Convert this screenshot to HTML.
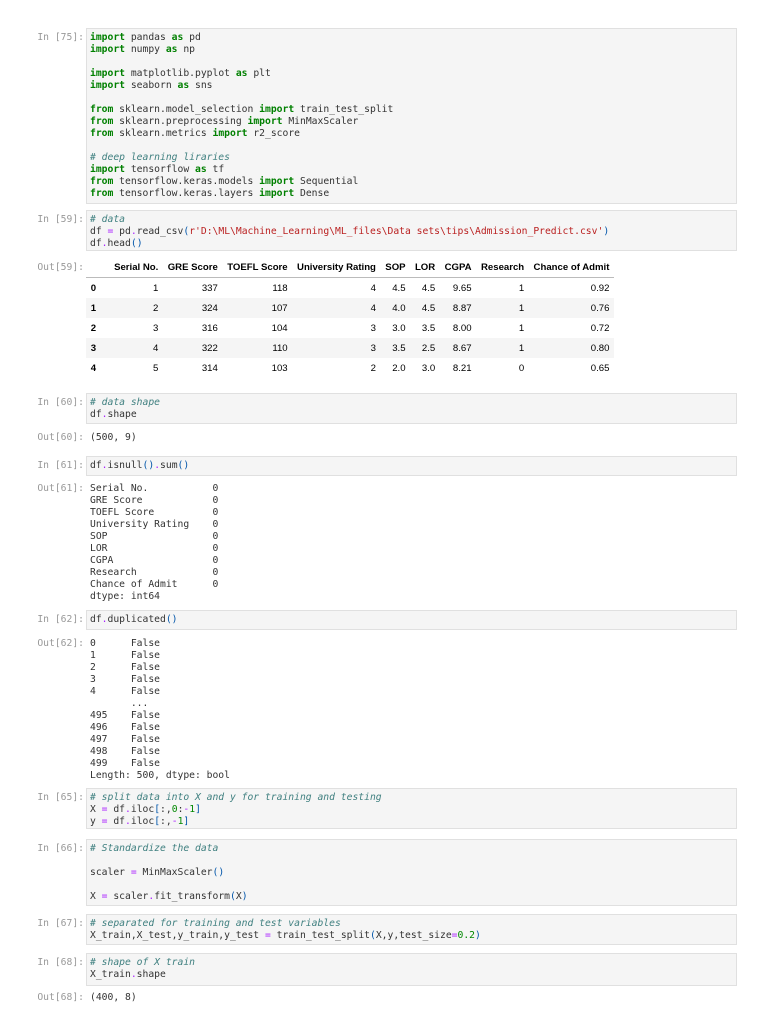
<!DOCTYPE html>
<html><head><meta charset="utf-8"><style>
body{margin:0;background:#fff;width:768px;height:1024px;position:relative;overflow:hidden;font-family:"DejaVu Sans Mono","Liberation Mono",monospace;font-size:9.7px;}
.p{position:absolute;right:684px;color:#999;white-space:pre;line-height:12px;margin-top:1px}
.b{position:absolute;left:86px;width:651px;background:#f5f5f5;border:1px solid #e0e0e0;box-sizing:border-box;}
.c{position:absolute;left:90px;white-space:pre;line-height:12px;color:#333;margin-top:1px}
.k{color:#008000;font-weight:bold}.m{color:#408080;font-style:italic}.o{color:#aa22ff}.s{color:#ba2121}.n{color:#080}.br{color:#0055aa}
table{position:absolute;left:86px;top:257px;border-collapse:collapse;font-family:"Liberation Sans",Arial,sans-serif;font-size:9.6px;color:#000}
td,th{text-align:right;padding:0 4.7px;height:20px}
th{font-weight:bold}
thead th{border-bottom:1px solid #bbb}
tbody tr:nth-child(even){background:#f5f5f5}
tbody th{text-align:left}
</style></head><body>
<div class="p" style="top:31px">In [75]:</div>
<div class="b" style="top:28px;height:176px"></div>
<div class="c" style="top:31px"><span class="k">import</span> pandas <span class="k">as</span> pd
<span class="k">import</span> numpy <span class="k">as</span> np

<span class="k">import</span> matplotlib.pyplot <span class="k">as</span> plt
<span class="k">import</span> seaborn <span class="k">as</span> sns

<span class="k">from</span> sklearn.model_selection <span class="k">import</span> train_test_split
<span class="k">from</span> sklearn.preprocessing <span class="k">import</span> MinMaxScaler
<span class="k">from</span> sklearn.metrics <span class="k">import</span> r2_score

<span class="m"># deep learning liraries</span>
<span class="k">import</span> tensorflow <span class="k">as</span> tf
<span class="k">from</span> tensorflow.keras.models <span class="k">import</span> Sequential
<span class="k">from</span> tensorflow.keras.layers <span class="k">import</span> Dense</div>

<div class="p" style="top:213px">In [59]:</div>
<div class="b" style="top:210px;height:41px"></div>
<div class="c" style="top:213px"><span class="m"># data</span>
df <span class="o">=</span> pd<span class="o">.</span>read_csv<span class="br">(</span><span class="s">r'D:\ML\Machine_Learning\ML_files\Data sets\tips\Admission_Predict.csv'</span><span class="br">)</span>
df<span class="o">.</span>head<span class="br">()</span></div>

<div class="p" style="top:261px">Out[59]:</div>
<table>
<thead><tr><th style="width:14px"></th><th>Serial No.</th><th>GRE Score</th><th>TOEFL Score</th><th>University Rating</th><th>SOP</th><th>LOR</th><th>CGPA</th><th>Research</th><th>Chance of Admit</th></tr></thead>
<tbody>
<tr><th>0</th><td>1</td><td>337</td><td>118</td><td>4</td><td>4.5</td><td>4.5</td><td>9.65</td><td>1</td><td>0.92</td></tr>
<tr><th>1</th><td>2</td><td>324</td><td>107</td><td>4</td><td>4.0</td><td>4.5</td><td>8.87</td><td>1</td><td>0.76</td></tr>
<tr><th>2</th><td>3</td><td>316</td><td>104</td><td>3</td><td>3.0</td><td>3.5</td><td>8.00</td><td>1</td><td>0.72</td></tr>
<tr><th>3</th><td>4</td><td>322</td><td>110</td><td>3</td><td>3.5</td><td>2.5</td><td>8.67</td><td>1</td><td>0.80</td></tr>
<tr><th>4</th><td>5</td><td>314</td><td>103</td><td>2</td><td>2.0</td><td>3.0</td><td>8.21</td><td>0</td><td>0.65</td></tr>
</tbody></table>

<div class="p" style="top:396px">In [60]:</div>
<div class="b" style="top:393px;height:31px"></div>
<div class="c" style="top:396px"><span class="m"># data shape</span>
df<span class="o">.</span>shape</div>
<div class="p" style="top:431px">Out[60]:</div>
<div class="c" style="top:431px">(500, 9)</div>

<div class="p" style="top:459px">In [61]:</div>
<div class="b" style="top:456px;height:20px"></div>
<div class="c" style="top:459px">df<span class="o">.</span>isnull<span class="br">()</span><span class="o">.</span>sum<span class="br">()</span></div>
<div class="p" style="top:482px">Out[61]:</div>
<div class="c" style="top:482px">Serial No.           0
GRE Score            0
TOEFL Score          0
University Rating    0
SOP                  0
LOR                  0
CGPA                 0
Research             0
Chance of Admit      0
dtype: int64</div>

<div class="p" style="top:613px">In [62]:</div>
<div class="b" style="top:610px;height:20px"></div>
<div class="c" style="top:613px">df<span class="o">.</span>duplicated<span class="br">()</span></div>
<div class="p" style="top:637px">Out[62]:</div>
<div class="c" style="top:637px">0      False
1      False
2      False
3      False
4      False
       ...  
495    False
496    False
497    False
498    False
499    False
Length: 500, dtype: bool</div>

<div class="p" style="top:791px">In [65]:</div>
<div class="b" style="top:788px;height:41px"></div>
<div class="c" style="top:791px"><span class="m"># split data into X and y for training and testing</span>
X <span class="o">=</span> df<span class="o">.</span>iloc<span class="br">[</span>:,<span class="n">0</span>:<span class="o">-</span><span class="n">1</span><span class="br">]</span>
y <span class="o">=</span> df<span class="o">.</span>iloc<span class="br">[</span>:,<span class="o">-</span><span class="n">1</span><span class="br">]</span></div>

<div class="p" style="top:842px">In [66]:</div>
<div class="b" style="top:839px;height:67px"></div>
<div class="c" style="top:842px"><span class="m"># Standardize the data</span>

scaler <span class="o">=</span> MinMaxScaler<span class="br">()</span>

X <span class="o">=</span> scaler<span class="o">.</span>fit_transform<span class="br">(</span>X<span class="br">)</span></div>

<div class="p" style="top:917px">In [67]:</div>
<div class="b" style="top:914px;height:31px"></div>
<div class="c" style="top:917px"><span class="m"># separated for training and test variables</span>
X_train,X_test,y_train,y_test <span class="o">=</span> train_test_split<span class="br">(</span>X,y,test_size<span class="o">=</span><span class="n">0.2</span><span class="br">)</span></div>

<div class="p" style="top:956px">In [68]:</div>
<div class="b" style="top:953px;height:33px"></div>
<div class="c" style="top:956px"><span class="m"># shape of X train</span>
X_train<span class="o">.</span>shape</div>
<div class="p" style="top:991px">Out[68]:</div>
<div class="c" style="top:991px">(400, 8)</div>
</body></html>
